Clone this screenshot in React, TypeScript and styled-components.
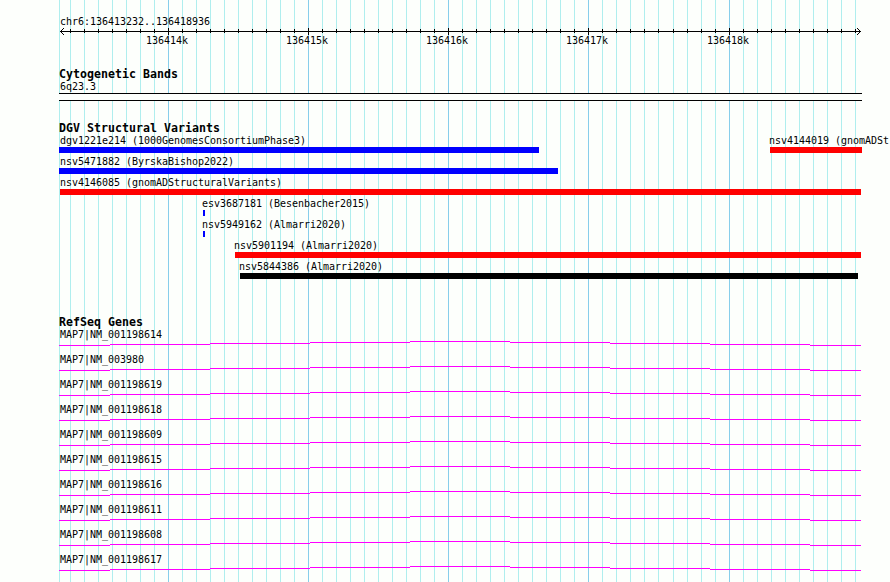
import React from 'react';
import styled, { createGlobalStyle } from 'styled-components';

type VariantColor = 'blue' | 'red' | 'black';

interface IFeature {
  label: string;
  start: number;
  width: number;
  color: VariantColor;
}

const COLORS: Record<VariantColor, string> = {
  blue: '#0000ff',
  red: '#ff0000',
  black: '#000000',
};

// offsets are measured from the left edge of the panel
const MAJOR_LINES = [109, 249, 389, 529, 670];
const GRID_LINES = [
  0,
  ...Array.from({ length: 43 }, (_, i) => 11 + i * 14),
  ...Array.from({ length: 14 }, (_, i) => 614 + i * 14),
];

const TICKS = GRID_LINES.slice(1);
const SCALE_LABELS = ['136414k', '136415k', '136416k', '136417k', '136418k'];

const VARIANT_ROWS: IFeature[][] = [
  [
    { label: 'dgv1221e214 (1000GenomesConsortiumPhase3)', start: 0, width: 480, color: 'blue' },
    { label: 'nsv4144019 (gnomADSt', start: 711, width: 92, color: 'red' },
  ],
  [{ label: 'nsv5471882 (ByrskaBishop2022)', start: 0, width: 499, color: 'blue' }],
  [{ label: 'nsv4146085 (gnomADStructuralVariants)', start: 1, width: 801, color: 'red' }],
  [{ label: 'esv3687181 (Besenbacher2015)', start: 144, width: 2, color: 'blue' }],
  [{ label: 'nsv5949162 (Almarri2020)', start: 144, width: 2, color: 'blue' }],
  [{ label: 'nsv5901194 (Almarri2020)', start: 176, width: 626, color: 'red' }],
  [{ label: 'nsv5844386 (Almarri2020)', start: 181, width: 618, color: 'black' }],
];

const GENES = [
  'NM_001198614',
  'NM_003980',
  'NM_001198619',
  'NM_001198618',
  'NM_001198609',
  'NM_001198615',
  'NM_001198616',
  'NM_001198611',
  'NM_001198608',
  'NM_001198617',
];

// the intron line climbs one pixel at a time to the middle and back down
const INTRON_PATH =
  'M0 4.5H51M51 3.5H151M151 2.5H251M251 1.5H351M351 0.5H451M451 1.5H551M551 2.5H651M651 3.5H751M751 4.5H802';

const GlobalStyle = createGlobalStyle`
  body {
    margin: 0;
    background: #fdfffc;
    overflow: hidden;
  }
`;

const Browser = styled.main`
  position: relative;
  box-sizing: border-box;
  width: 890px;
  height: 582px;
  padding-left: 59px;
  overflow: hidden;
  background: #fdfffc;
  color: #000;
  font: 10px/12px 'DejaVu Sans Mono', monospace;
  letter-spacing: -0.02px;
  white-space: pre;
`;

const Grid = styled.svg`
  position: absolute;
  top: 0;
  left: 59px;
`;

const Content = styled.div`
  position: relative;
  display: flex;
  flex-direction: column;
`;

const Ruler = styled.section`
  height: 68px;
  padding-top: 16px;
  box-sizing: border-box;
`;

const Region = styled.div`
  height: 11px;
  padding-left: 1px;
`;

const Axis = styled.svg`
  display: block;
`;

const ScaleLabels = styled.div`
  display: grid;
  grid-template-columns: repeat(4, 140px) 142px;
  width: 702px;
  margin-top: -1px;
  padding-left: 38px;
  text-align: center;
`;

const Track = styled.section<{ $height: number }>`
  height: ${({ $height }) => $height}px;
`;

const TrackTitle = styled.h2`
  height: 12px;
  margin: 0;
  font-size: 11.6px;
  line-height: 12px;
  font-weight: 700;
  letter-spacing: 0.016px;
`;

const Band = styled.div`
  width: 803px;
  height: 8px;
  box-sizing: border-box;
  border: solid #000;
  border-width: 1px 0;
  background: #fdfffc;
`;

const FeatureRow = styled.div`
  display: grid;
  height: 21px;
`;

const Feature = styled.div<{ $start: number }>`
  grid-area: 1 / 1;
  margin-left: ${({ $start }) => $start}px;
`;

const FeatureLabel = styled.div<{ $indent?: number }>`
  height: 12px;
  padding-top: 1px;
  margin-left: ${({ $indent = 1 }) => $indent}px;
`;

const FeatureBar = styled.div<{ $width: number; $color: VariantColor }>`
  width: ${({ $width }) => $width}px;
  height: 6px;
  background: ${({ $color }) => COLORS[$color]};
`;

const Gene = styled.div`
  height: 25px;
`;

const Intron = styled.svg`
  display: block;
`;

const GridLines: React.FC = () => (
  <Grid width='803' height='582' shapeRendering='crispEdges'>
    {GRID_LINES.map((x) => (
      <rect key={x} x={x} y='0' width='1' height='582' fill={MAJOR_LINES.includes(x) ? '#87ceeb' : '#afeeee'} />
    ))}
  </Grid>
);

const ScaleAxis: React.FC = () => (
  <Axis width='803' height='9' shapeRendering='crispEdges'>
    <rect x='1' y='4' width='801' height='1' />
    {TICKS.map((x) => {
      const isMajor = MAJOR_LINES.includes(x);
      return <rect key={x} x={x} y={isMajor ? 1 : 2} width='1' height={isMajor ? 7 : 4} />;
    })}
    <path d='M1 4h1v1h-1zM2 3h1v1h-1zM3 2h1v1h-1zM4 1h1v1h-1zM2 5h1v1h-1zM3 6h1v1h-1zM4 7h1v1h-1z' />
    <path d='M801 4h1v1h-1zM800 3h1v1h-1zM799 2h1v1h-1zM798 1h1v1h-1zM800 5h1v1h-1zM799 6h1v1h-1zM798 7h1v1h-1z' />
  </Axis>
);

const App: React.FC = () => (
  <>
    <GlobalStyle />
    <Browser>
      <GridLines />
      <Content>
        <Ruler>
          <Region>chr6:136413232..136418936</Region>
          <ScaleAxis />
          <ScaleLabels>
            {SCALE_LABELS.map((label) => (
              <span key={label}>{label}</span>
            ))}
          </ScaleLabels>
        </Ruler>
        <Track $height={54}>
          <TrackTitle>Cytogenetic Bands</TrackTitle>
          <FeatureLabel>6q23.3</FeatureLabel>
          <Band />
        </Track>
        <Track $height={194}>
          <TrackTitle>DGV Structural Variants</TrackTitle>
          {VARIANT_ROWS.map((row) => (
            <FeatureRow key={row[0].label}>
              {row.map(({ label, start, width, color }) => (
                <Feature key={label} $start={start}>
                  {/* labels never start left of the panel padding */}
                  <FeatureLabel $indent={Math.max(1 - start, -1)}>{label}</FeatureLabel>
                  <FeatureBar $width={width} $color={color} />
                </Feature>
              ))}
            </FeatureRow>
          ))}
        </Track>
        <Track $height={266}>
          <TrackTitle>RefSeq Genes</TrackTitle>
          {GENES.map((gene) => (
            <Gene key={gene}>
              <FeatureLabel>{`MAP7|${gene}`}</FeatureLabel>
              <Intron width='802' height='6'>
                <path d={INTRON_PATH} stroke='#ff00ff' shapeRendering='crispEdges' />
              </Intron>
            </Gene>
          ))}
        </Track>
      </Content>
    </Browser>
  </>
);

export default App;
